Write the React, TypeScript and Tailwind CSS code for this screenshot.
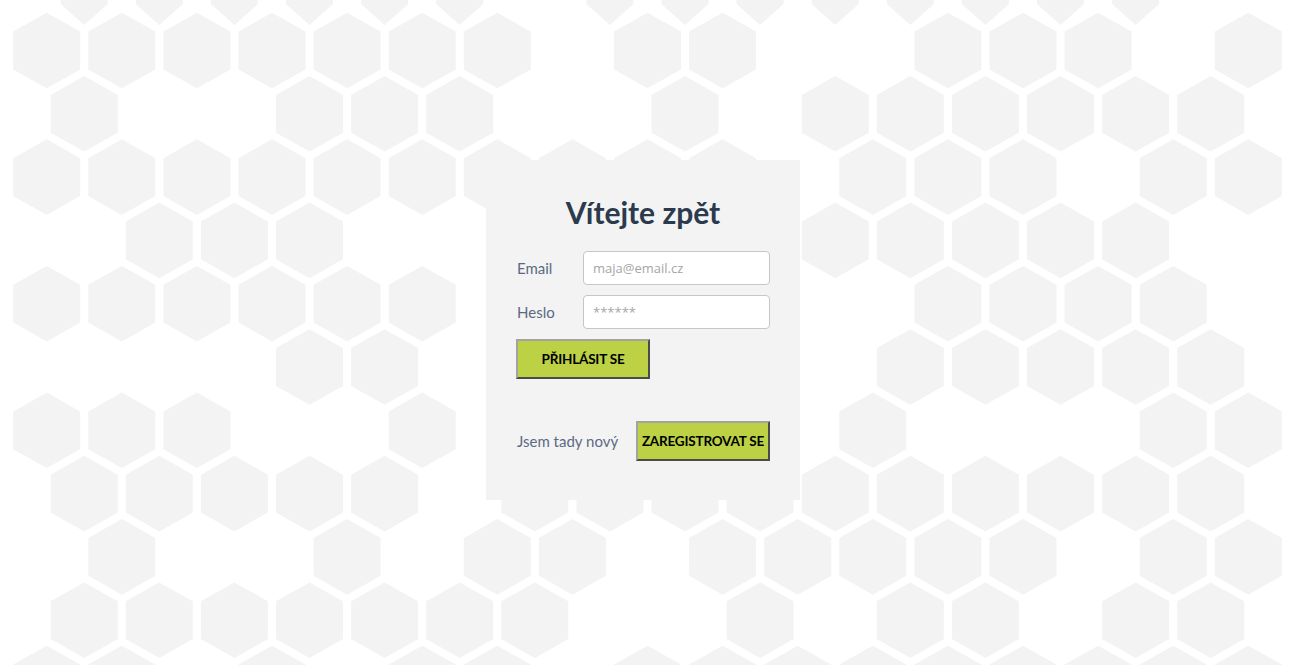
import React from 'react'

// hex honeycomb in the background, rows alternate between shifted / unshifted
const HEX_ROWS: [number, number[]][] = [
  [0, [1, 2, 3, 4, 5, 6, 8, 9, 10, 11, 12, 13, 14, 15]],
  [1, [0, 1, 2, 3, 4, 5, 6, 8, 9, 12, 13, 14, 16]],
  [2, [1, 4, 5, 6, 9, 11, 12, 13, 14, 15, 16]],
  [3, [0, 1, 2, 3, 4, 5, 6, 7, 8, 9, 11, 12, 13, 15, 16]],
  [4, [2, 3, 4, 11, 12, 13, 14, 15]],
  [5, [0, 1, 2, 3, 4, 5, 12, 13, 14, 15]],
  [6, [4, 5, 12, 13, 14, 15, 16]],
  [7, [0, 1, 2, 5, 11, 15, 16]],
  [8, [1, 2, 3, 4, 5, 7, 8, 9, 10, 11, 12, 13, 14, 15, 16]],
  [9, [1, 4, 6, 7, 9, 10, 11, 12, 13, 15, 16]],
  [10, [1, 2, 3, 4, 5, 6, 7, 10, 12, 13, 15, 16]],
  [11, [0, 1, 3, 5, 6, 8, 9, 10, 11, 12, 13, 14, 15, 16]],
]

function hexPoints(cx: number, cy: number, top: boolean) {
  if (top) {
    // first row is cut off by the top edge
    return `${cx - 23.5},-10 ${cx + 23.5},-10 ${cx + 23.5},4 ${cx},25 ${cx - 23.5},4`
  }
  return [
    [cx, cy - 37.8],
    [cx + 33.5, cy - 18.9],
    [cx + 33.5, cy + 18.9],
    [cx, cy + 37.8],
    [cx - 33.5, cy + 18.9],
    [cx - 33.5, cy - 18.9],
  ]
    .map((p) => p.join(','))
    .join(' ')
}

function Honeycomb() {
  return (
    <svg
      className="absolute left-0 top-0"
      width="1295"
      height="665"
      viewBox="0 0 1295 665"
      aria-hidden="true"
    >
      {HEX_ROWS.map(([r, cols]) =>
        cols.map((k) => {
          const cy = -12.8 + 63.3 * r
          const cx = (r % 2 === 0 ? 9.1 : 46.7) + 75.1 * k
          return <polygon key={`${r}-${k}`} points={hexPoints(cx, cy, r === 0)} fill="#f3f3f3" />
        })
      )}
    </svg>
  )
}

const font = { fontFamily: 'Lato, "Open Sans", sans-serif' }

function GreenButton({ children }: { children: React.ReactNode }) {
  return (
    <button
      type="button"
      className="h-10 w-[134px] whitespace-nowrap border-2 border-t-[#a3a3a3] border-l-[#a3a3a3] border-r-[#4a4a4a] border-b-[#4a4a4a] bg-[#bcd144] px-0 text-[13.5px] font-bold uppercase tracking-[-0.2px] text-black"
    >
      {children}
    </button>
  )
}

export default function App() {
  return (
    <div className="relative min-h-screen overflow-hidden bg-white" style={font}>
      <Honeycomb />

      <div className="relative flex justify-center pr-[9px] pt-[160px]">
        <div className="flex h-[340px] w-[314px] flex-col bg-[#f3f3f3] px-[30px] pt-[34px]">
          <h1 className="text-center text-[30px] font-bold leading-9 text-[#2b3a4c]">Vítejte zpět</h1>

          <div className="mt-[21px] flex flex-col gap-[10px]">
            <div className="flex items-center">
              <label className="w-[67px] pl-px text-[15px] text-[#5b6a82]">Email</label>
              <input
                className="h-[34px] flex-1 rounded-[4px] border border-[#c9c6c2] bg-white px-[9px] text-[13px] text-[#555] placeholder:text-[#a6a6a6] focus:outline-none"
                style={{ fontFamily: '"Open Sans", sans-serif' }}
                placeholder="maja@email.cz"
              />
            </div>
            <div className="flex items-center">
              <label className="w-[67px] pl-px text-[15px] text-[#5b6a82]">Heslo</label>
              <input
                className="h-[34px] flex-1 rounded-[4px] border border-[#c9c6c2] bg-white px-[9px] text-[13px] text-[#555] placeholder:text-[#a6a6a6] focus:outline-none"
                style={{ fontFamily: '"Open Sans", sans-serif' }}
                placeholder="******"
              />
            </div>
          </div>

          <div className="mt-[10px]">
            <GreenButton>Přihlásit se</GreenButton>
          </div>

          <div className="mt-[42px] flex items-center justify-between">
            <span className="pl-px text-[15px] text-[#5b6a82]">Jsem tady nový</span>
            <GreenButton>Zaregistrovat se</GreenButton>
          </div>
        </div>
      </div>
    </div>
  )
}
